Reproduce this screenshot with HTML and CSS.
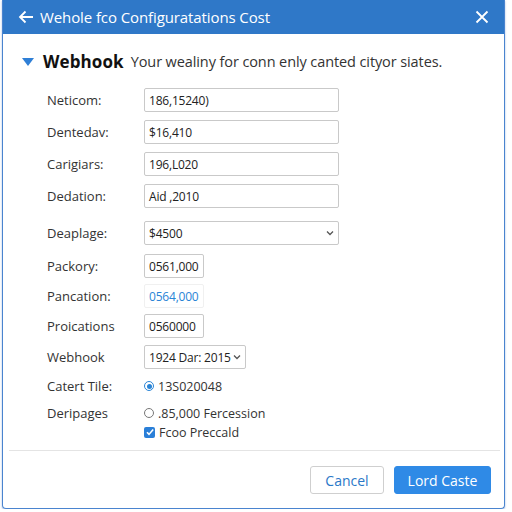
FILE: index.html
```html
<!DOCTYPE html>
<html>
<head>
<meta charset="utf-8">
<link rel="stylesheet" href="styles.css">
</head>
<body>
<div class="dialog">
  <div class="titlebar">
    <svg class="back" width="16" height="14" viewBox="0 0 16 14"><path d="M15 7H2M7.5 1.5L2 7l5.5 5.5" fill="none" stroke="#fff" stroke-width="1.8"/></svg>
    <span class="title">Wehole fco Configuratations Cost</span>
    <svg class="close" width="14" height="14" viewBox="0 0 14 14"><path d="M1.5 1.5l11 11M12.5 1.5l-11 11" stroke="#fff" stroke-width="1.8"/></svg>
  </div>
  <div class="body">
    <div class="section">
      <svg class="tri" width="12" height="8" viewBox="0 0 12 8"><path d="M0 0h12L6 8z" fill="#2f7fd6"/></svg>
      <span class="sec-title">Webhook</span>
      <span class="sec-desc">Your wealiny for conn enly canted cityor siates.</span>
    </div>
    <div class="form">
      <div class="row"><label>Neticom:</label><div class="field wide">186,15240)</div></div>
      <div class="row"><label>Dentedav:</label><div class="field wide">$16,410</div></div>
      <div class="row"><label>Carigiars:</label><div class="field wide">196,L020</div></div>
      <div class="row r4"><label>Dedation:</label><div class="field wide">Aid ,2010</div></div>
      <div class="row r5"><label>Deaplage:</label><div class="field wide select">$4500<svg width="8" height="6" viewBox="0 0 8 6"><path d="M1 1.5l3 3 3-3" fill="none" stroke="#555" stroke-width="1.3"/></svg></div></div>
      <div class="row r6"><label>Packory:</label><div class="field small">0561,000</div></div>
      <div class="row r6"><label>Pancation:</label><div class="field small link">0564,000</div></div>
      <div class="row r8"><label>Proications</label><div class="field small">0560000</div></div>
      <div class="row r8"><label>Webhook</label><div class="field date">1924 Dar: 2015<svg width="8" height="6" viewBox="0 0 8 6"><path d="M1 1.5l3 3 3-3" fill="none" stroke="#555" stroke-width="1.3"/></svg></div></div>
      <div class="row opt"><label>Catert Tile:</label><div class="choice"><span class="radio on"></span>13S020048</div></div>
      <div class="row opt2"><label>Deripages</label>
        <div class="choices">
          <div class="choice"><span class="radio"></span>.85,000 Fercession</div>
          <div class="choice"><span class="check"><svg width="10" height="10" viewBox="0 0 10 10"><path d="M2 5.2l2 2.2L8.2 2.5" fill="none" stroke="#fff" stroke-width="1.6"/></svg></span>Fcoo Preccald</div>
        </div>
      </div>
    </div>
    <div class="footer">
      <button class="btn cancel">Cancel</button>
      <button class="btn primary">Lord Caste</button>
    </div>
  </div>
</div>
</body>
</html>
```
FILE: styles.css
```css
html, body { margin: 0; padding: 0; background: #fff; }
body { font-family: "Open Sans", "Noto Sans", sans-serif; color: #222; }
.dialog {
  width: 503px;
  height: 509px;
  margin-left: 2px;
  box-sizing: border-box;
  border: 1px solid #4a84cf;
  border-top: none;
  border-radius: 0 0 4px 4px;
  display: flex;
  flex-direction: column;
  box-shadow: 0 1px 2px rgba(60,110,190,0.5);
}
.titlebar {
  height: 34px;
  background: #2f78c8;
  display: flex;
  align-items: center;
  padding: 0 15px 0 15px;
  color: #fff;
  flex-shrink: 0;
}
.back { margin-right: 6px; }
.title { font-size: 15px; flex: 1; letter-spacing: -0.1px; }
.sec-title { font-weight: 700; font-size: 17px; color: #111; margin-right: 7px; letter-spacing: 0.1px; }
.sec-desc { font-size: 14.5px; color: #333; letter-spacing: -0.1px; }
.body { flex: 1; display: flex; flex-direction: column; }
.section {
  display: flex;
  align-items: center;
  padding: 15px 0 0 19px;
  height: 24px;
}
.tri { margin-right: 9px; margin-top: 1px; }
.form { padding: 15px 0 0 44px; display: flex; flex-direction: column; }
.row { display: flex; align-items: center; height: 24px; margin-bottom: 8px; }
.row label { width: 97px; font-size: 13px; color: #333; }
.row.r4 { margin-bottom: 13px; }
.row.r5 { margin-bottom: 9px; }
.row.r6 { margin-bottom: 6px; }
.row.r8 { margin-bottom: 7px; }
.field {
  height: 24px;
  box-sizing: border-box;
  border: 1px solid #c9c9c9;
  border-radius: 2px;
  font-size: 12px;
  color: #222;
  display: flex;
  align-items: center;
  padding: 0 4px;
  background: #fff;
  white-space: nowrap;
  letter-spacing: -0.2px;
}
.field.wide { width: 195px; }
.field.small { width: 60px; }
.field.link { color: #2a84d6; border-color: #f0f0f0; }
.field.date { width: 102px; justify-content: space-between; }
.field.select { justify-content: space-between; }
.row.opt { height: 20px; margin-bottom: 8px; }
.row.opt2 { align-items: flex-start; margin-bottom: 0; height: auto; }
.row.opt2 label { line-height: 18px; }
.choices { display: flex; flex-direction: column; gap: 1px; }
.choice { display: flex; align-items: center; font-size: 12.5px; color: #333; height: 18px; }
.radio {
  width: 10px; height: 10px; border-radius: 50%;
  border: 1px solid #777; margin-right: 4px; box-sizing: border-box;
  display: inline-block; position: relative;
}
.radio.on { border-color: #2a84d6; }
.radio.on::after {
  content: ""; position: absolute; left: 1.5px; top: 1.5px;
  width: 5px; height: 5px; border-radius: 50%; background: #2a84d6;
}
.check {
  width: 11px; height: 11px; border-radius: 2px; background: #2a7fd8;
  display: inline-flex; align-items: center; justify-content: center; margin-right: 4px;
}
.footer {
  margin-top: auto;
  border-top: 1px solid #e4e4e4;
  margin-left: 6px; margin-right: 4px;
  display: flex; justify-content: flex-end; gap: 10px;
  padding: 15px 9px 14px 0;
}
.btn {
  height: 28px; font-size: 14px; font-family: "Open Sans", "Noto Sans", sans-serif;
  border-radius: 3px; cursor: pointer;
}
.cancel { width: 74px; background: #fff; color: #2a78c8; border: 1px solid #cfcfcf; }
.primary { width: 97px; background: #2f8ae6; color: #fff; border: 1px solid #2f8ae6; }
```
